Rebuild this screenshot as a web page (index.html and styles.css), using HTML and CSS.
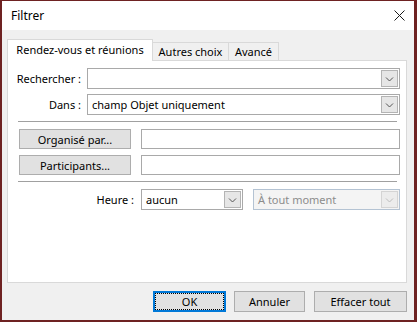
FILE: index.html
```html
<!DOCTYPE html>
<html>
<head>
    <title>Filtrer</title>
    <link rel="stylesheet" href="styles.css">
</head>
<body>
    <div class="window">
        <div class="titlebar">
            <span class="title">Filtrer</span>
            <svg class="close" width="11" height="11" viewBox="0 0 11 11">
                <path d="M0.5 0.5L10.5 10.5M10.5 0.5L0.5 10.5" stroke="#1a1a1a" stroke-width="1" fill="none"/>
            </svg>
        </div>

        <div class="dialog-body">
            <div class="tabs">
                <div class="tab active">Rendez-vous et réunions</div>
                <div class="tab tab-other">Autres choix</div>
                <div class="tab tab-adv">Avancé</div>
            </div>

            <div class="panel">
                <div class="row">
                    <span class="label">Rechercher :</span>
                    <div class="combo">
                        <span class="combo-text"></span>
                        <span class="drop">
                            <svg width="15" height="15" viewBox="0 0 15 15"><path d="M4 6.5L7.5 10L11 6.5" stroke="#555" fill="none"/></svg>
                        </span>
                    </div>
                </div>
                <div class="row row-gap">
                    <span class="label">Dans :</span>
                    <div class="combo">
                        <span class="combo-text">champ Objet uniquement</span>
                        <span class="drop">
                            <svg width="15" height="15" viewBox="0 0 15 15"><path d="M4 6.5L7.5 10L11 6.5" stroke="#555" fill="none"/></svg>
                        </span>
                    </div>
                </div>

                <div class="separator"></div>

                <div class="row-btn">
                    <button class="btn btn-side">Organisé par...</button>
                    <div class="field"></div>
                </div>
                <div class="row-btn row-gap2">
                    <button class="btn btn-side">Participants...</button>
                    <div class="field"></div>
                </div>

                <div class="separator"></div>

                <div class="row row-time">
                    <span class="label label-time">Heure :</span>
                    <div class="combo combo-small">
                        <span class="combo-text">aucun</span>
                        <span class="drop">
                            <svg width="15" height="15" viewBox="0 0 15 15"><path d="M4 6.5L7.5 10L11 6.5" stroke="#555" fill="none"/></svg>
                        </span>
                    </div>
                    <div class="combo disabled">
                        <span class="combo-text">À tout moment</span>
                        <span class="drop">
                            <svg width="15" height="15" viewBox="0 0 15 15"><path d="M4 6.5L7.5 10L11 6.5" stroke="#bdbdbd" fill="none"/></svg>
                        </span>
                    </div>
                </div>
            </div>

            <div class="footer">
                <button class="btn btn-ok">OK</button>
                <button class="btn btn-cancel">Annuler</button>
                <button class="btn btn-clear">Effacer tout</button>
            </div>
        </div>
    </div>
</body>
</html>
```

FILE: styles.css
```css
body {
    margin: 0;
    font-family: "Noto Sans", sans-serif;
    font-size: 11px;
    color: #000;
    background: #fff;
}
.window {
    width: 417px;
    height: 322px;
    box-sizing: border-box;
    border: 1px solid #6e2222;
    border-left-width: 2px;
    border-right-width: 3px;
    border-bottom-width: 2px;
    display: flex;
    flex-direction: column;
    background: #f0f0f0;
}
.titlebar {
    height: 29px;
    flex: none;
    background: #fff;
    display: flex;
    align-items: center;
    justify-content: space-between;
    padding: 0 9px 0 9px;
}
.title {
    font-size: 12px;
}
.close {
    display: block;
}
.dialog-body {
    flex: 1;
    padding: 9px 0 0 5px;
}

/* tabs */
.tabs {
    display: flex;
    align-items: flex-end;
    height: 22px;
    margin-bottom: -1px;
}
.tab {
    box-sizing: border-box;
    border: 1px solid #d9d9d9;
    border-bottom: none;
    height: 18px;
    margin-bottom: 1px;
    display: flex;
    align-items: center;
    justify-content: center;
    background: #f0f0f0;
    white-space: nowrap;
}
.tab.active {
    position: relative;
    z-index: 1;
    background: #fff;
    height: 22px;
    margin-bottom: 0;
    width: 146px;
    padding-bottom: 2px;
}
.tab-other {
    width: 77px;
    margin-left: -1px;
}
.tab-adv {
    width: 51px;
    margin-left: -1px;
}

/* panel */
.panel {
    box-sizing: border-box;
    width: 400px;
    height: 223px;
    background: #fff;
    border: 1px solid #d9d9d9;
    padding: 7px 6px 0 9px;
}
.row {
    display: flex;
    align-items: center;
    height: 21px;
}
.row-gap {
    margin-top: 5px;
}
.label {
    width: 64px;
    display: flex;
    justify-content: flex-end;
    white-space: nowrap;
    margin-right: 6px;
    flex: none;
}
.combo {
    flex: 1;
    box-sizing: border-box;
    height: 21px;
    border: 1px solid #a9a9a9;
    background: #fff;
    display: flex;
    align-items: center;
    padding: 1px;
}
.combo-text {
    flex: 1;
    padding-left: 3px;
    white-space: nowrap;
}
.drop {
    box-sizing: border-box;
    width: 17px;
    height: 17px;
    border: 1px solid #b4b4b4;
    background: #e6e6e6;
    display: flex;
    align-items: center;
    justify-content: center;
}
.separator {
    height: 1px;
    background: #a0a0a0;
    margin: 6px 3px 0 1px;
}
.row-btn {
    display: flex;
    height: 20px;
    margin-top: 7px;
}
.row-gap2 {
    margin-top: 6px;
}
.btn {
    font-family: inherit;
    font-size: 11px;
    color: #000;
    background: #e1e1e1;
    border: 1px solid #adadad;
    padding: 0;
    margin: 0;
    box-sizing: border-box;
    white-space: nowrap;
}
.btn-side {
    width: 112px;
    height: 20px;
    margin-left: 2px;
    margin-right: 10px;
}
.field {
    flex: 1;
    box-sizing: border-box;
    border: 1px solid #a9a9a9;
    background: #fff;
}
.row-time {
    margin-top: 7px;
}
.label-time {
    width: 117px;
    margin-right: 7px;
}
.combo-small {
    flex: none;
    width: 102px;
    margin-right: 10px;
}
.combo.disabled {
    background: #f4f4f4;
    border-color: #b4c3d3;
    color: #8c8c8c;
}
.combo.disabled .drop {
    background: #ececec;
    border-color: #d4d4d4;
}

/* footer buttons */
.footer {
    width: 400px;
    display: flex;
    justify-content: flex-end;
    margin-top: 8px;
}
.footer .btn {
    height: 21px;
}
.btn-ok {
    width: 73px;
    border-color: #0078d7;
    box-shadow: inset 0 0 0 1px #0078d7;
    outline: 1px dotted #000;
    outline-offset: -3px;
}
.btn-cancel {
    width: 71px;
    margin-left: 8px;
}
.btn-clear {
    width: 93px;
    margin-left: 9px;
}
```
